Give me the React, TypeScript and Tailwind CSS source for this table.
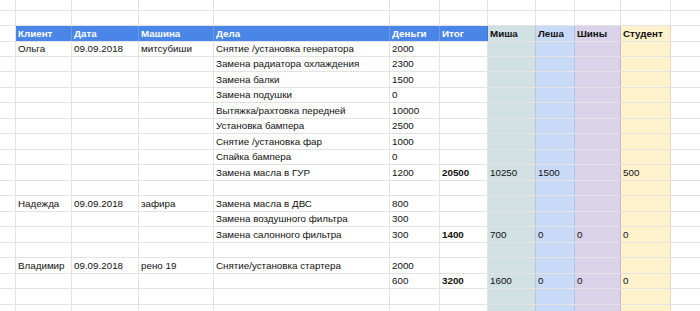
import React from "react";

type Cell = { text?: string; bold?: boolean };

// column widths, each includes its 1px right grid line
const widths = [
  "w-[16px]",
  "w-[56px]",
  "w-[67px]",
  "w-[75px]",
  "w-[176px]",
  "w-[50px]",
  "w-[48px]",
  "w-[48px]",
  "w-[39px]",
  "w-[46px]",
  "w-[50px]",
];

const colBg = ["", "", "", "", "", "", "", "bg-[#d0e0e3]", "bg-[#c9daf8]", "bg-[#d9d2e9]", "bg-[#fff2cc]"];

const heights = [
  "h-[11px]",
  "h-[15px]",
  "h-[16px]",
  "h-[15px]",
  "h-[15px]",
  "h-[16px]",
  "h-[15px]",
  "h-[16px]",
  "h-[15px]",
  "h-[16px]",
  "h-[15px]",
  "h-[16px]",
  "h-[15px]",
  "h-[16px]",
  "h-[15px]",
  "h-[16px]",
  "h-[15px]",
  "h-[16px]",
  "h-[15px]",
  "h-[16px]",
  "h-[15px]",
  "h-[16px]",
];

const header = ["Клиент", "Дата", "Машина", "Дела", "Деньги", "Итог", "Миша", "Леша", "Шины", "Студент"];

// rows of [Клиент, Дата, Машина, Дела, Деньги, Итог, Миша, Леша, Шины, Студент]
const data: (string | Cell)[][] = [
  ["Ольга", "09.09.2018", "митсубиши", "Снятие /установка генератора", "2000"],
  ["", "", "", "Замена радиатора охлаждения", "2300"],
  ["", "", "", "Замена балки", "1500"],
  ["", "", "", "Замена подушки", "0"],
  ["", "", "", "Вытяжка/рахтовка передней", "10000"],
  ["", "", "", "Установка бампера", "2500"],
  ["", "", "", "Снятие /установка фар", "1000"],
  ["", "", "", "Спайка бампера", "0"],
  ["", "", "", "Замена масла в ГУР", "1200", { text: "20500", bold: true }, "10250", "1500", "", "500"],
  [],
  ["Надежда", "09.09.2018", "зафира", "Замена масла в ДВС", "800"],
  ["", "", "", "Замена воздушного фильтра", "300"],
  ["", "", "", "Замена салонного фильтра", "300", { text: "1400", bold: true }, "700", "0", "0", "0"],
  [],
  ["Владимир", "09.09.2018", "рено 19", "Снятие/установка стартера", "2000"],
  ["", "", "", "", "600", { text: "3200", bold: true }, "1600", "0", "0", "0"],
  [],
  [],
];

const GridRow = ({
  h,
  cells,
  colored,
  head,
}: {
  h: string;
  cells: (string | Cell)[];
  colored: boolean;
  head?: boolean;
}) => (
  <div className={`flex ${h} border-b border-black/[0.11]`}>
    {widths.map((w, i) => {
      const c = i === 0 ? "" : cells[i - 1];
      const cell: Cell = typeof c === "string" || c === undefined ? { text: c as string } : c;
      let bg = colored ? colBg[i] : "";
      let txt = "text-[#111]";
      let line = "border-black/[0.11]";
      if (head && i >= 1 && i <= 6) {
        bg = "bg-[#4a86e8]";
        txt = "text-white";
        if (i < 6) line = "border-white/[0.18]";
      }
      return (
        <div
          key={i}
          className={`${w} shrink-0 border-r ${line} ${bg} ${txt} ${
            head || cell.bold ? "font-bold" : ""
          } pl-[2px] flex items-center overflow-hidden whitespace-nowrap`}
        >
          {cell.text}
        </div>
      );
    })}
    <div className="flex-1" />
  </div>
);

export default function App() {
  return (
    <div
      className="w-[700px] h-[311px] overflow-hidden bg-white text-[9.8px] leading-none"
      style={{ fontFamily: '"Liberation Sans", Arial, sans-serif' }}
    >
      <GridRow h={heights[0]} cells={[]} colored={false} />
      <GridRow h={heights[1]} cells={[]} colored={false} />
      <GridRow h={heights[2]} cells={header} colored head />
      {data.map((r, i) => (
        <GridRow key={i} h={heights[i + 3] ?? "h-[16px]"} cells={r} colored />
      ))}
    </div>
  );
}
